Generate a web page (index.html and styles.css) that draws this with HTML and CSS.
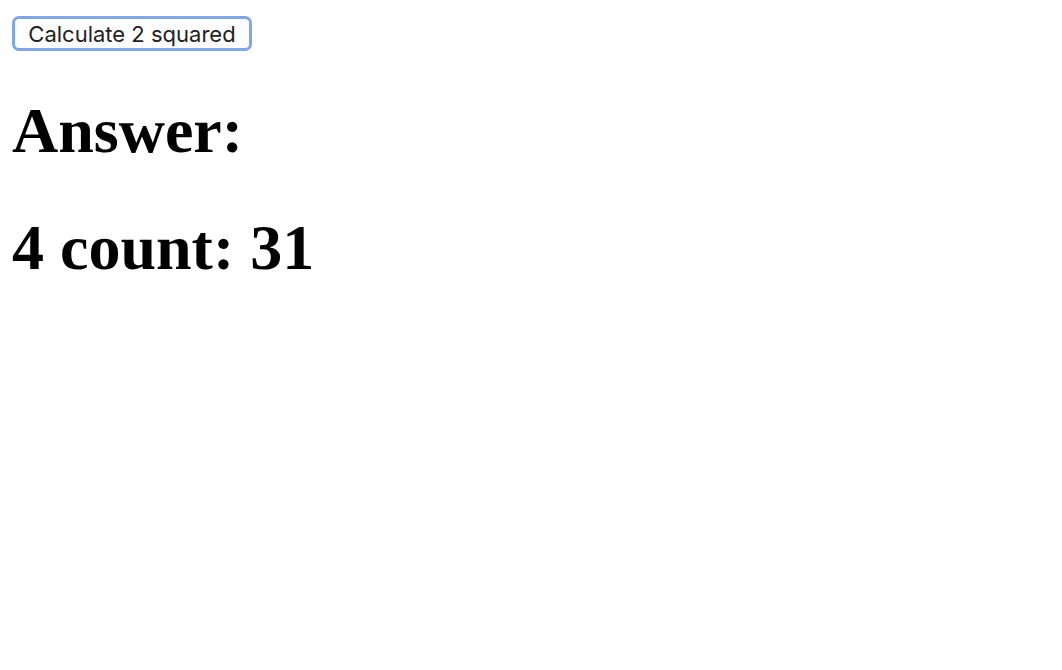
FILE: index.html
```html
<!DOCTYPE html>
<html>
<head>
<meta charset="utf-8">
<link rel="stylesheet" href="styles.css">
</head>
<body>
<div class="controls"><button class="calc">Calculate 2 squared</button></div>
<h1 class="answer">Answer:</h1>
<h1 class="answer">4 count: 31</h1>
</body>
</html>
```
FILE: styles.css
```css
body {
  margin: 16px 12px;
  font-family: "Liberation Serif", serif;
  background: #fff;
  color: #000;
}
.controls {
  display: flex;
}
.calc {
  font-family: "Inter", "Liberation Sans", sans-serif;
  font-size: 22px;
  color: #222;
  background: #fff;
  border: 3px solid #7ea6ec;
  border-radius: 7px;
  height: 35px;
  width: 240px;
  padding: 1px 8px 0;
  display: flex;
  align-items: center;
  justify-content: center;
}
.answer {
  font-size: 64px;
  font-weight: bold;
  margin: 43px 0;
}
```
